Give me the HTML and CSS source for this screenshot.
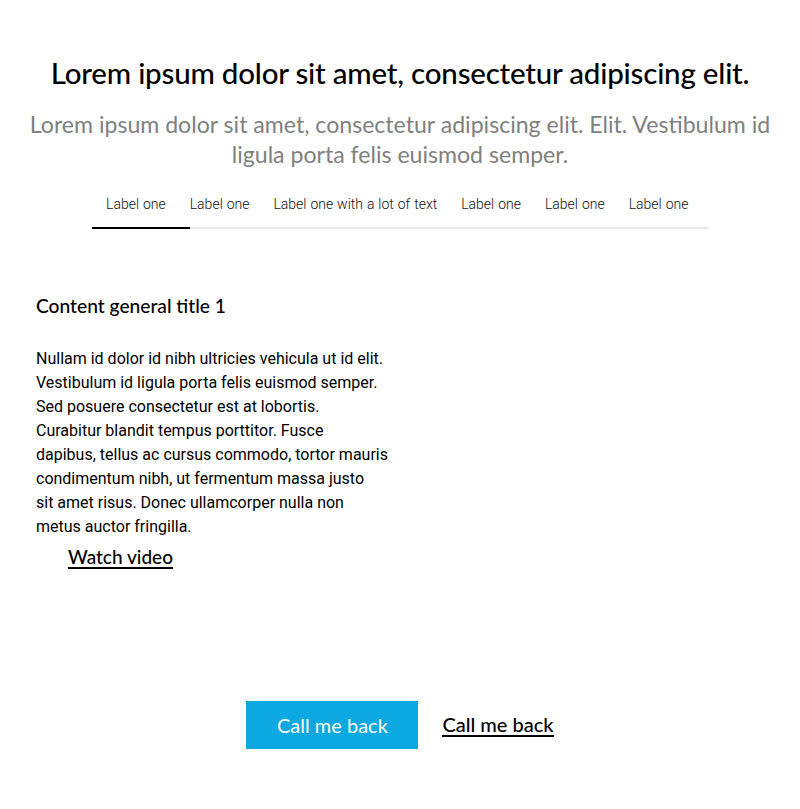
FILE: index.html
```html
<!DOCTYPE html>
<html lang="en">
<head>
<meta charset="utf-8">
<title>Page</title>
<link rel="stylesheet" href="styles.css">
</head>
<body>
<header class="hero">
  <h1 class="hero-title">Lorem ipsum dolor sit amet, consectetur adipiscing elit.</h1>
  <p class="hero-sub">Lorem ipsum dolor sit amet, consectetur adipiscing elit. Elit. Vestibulum id ligula porta felis euismod semper.</p>
</header>
<nav class="tabs">
  <a class="tab active">Label one</a>
  <a class="tab">Label one</a>
  <a class="tab">Label one with a lot of text</a>
  <a class="tab">Label one</a>
  <a class="tab">Label one</a>
  <a class="tab">Label one</a>
</nav>
<section class="content">
  <h2 class="content-title">Content general title 1</h2>
  <p class="content-text">Nullam id dolor id nibh ultricies vehicula ut id elit.<br>
Vestibulum id ligula porta felis euismod semper.<br>
Sed posuere consectetur est at lobortis.<br>
Curabitur blandit tempus porttitor. Fusce<br>
dapibus, tellus ac cursus commodo, tortor mauris<br>
condimentum nibh, ut fermentum massa justo<br>
sit amet risus. Donec ullamcorper nulla non<br>
metus auctor fringilla.</p>
  <a class="video-link">Watch video</a>
</section>
<footer class="actions">
  <a class="btn-primary">Call me back</a>
  <a class="btn-link">Call me back</a>
</footer>
</body>
</html>
```
FILE: styles.css
```css
* { box-sizing: border-box; }
body {
  margin: 0;
  background: #fff;
  color: #000;
  font-family: "Lato", "Liberation Sans", sans-serif;
}
.hero {
  padding: 54px 20px 0;
  text-align: center;
}
.hero-title {
  margin: 0;
  font-size: 29.5px;
  font-weight: 500;
  line-height: 38px;
  letter-spacing: -0.2px;
}
.hero-sub {
  margin: 17px 0 0;
  font-size: 23.1px;
  line-height: 30px;
  color: #808080;
}
.tabs {
  display: flex;
  width: 616px;
  margin: 22px auto 0;
  border-bottom: 2px solid #e6e6e6;
  font-family: "Roboto", sans-serif;
  font-size: 14px;
  font-weight: 300;
  word-spacing: 0.5px;
  color: #111;
  white-space: nowrap;
}
.tab {
  flex: none;
  padding: 5px 24px 15px 0;
  position: relative;
}
.tab.active {
  padding-left: 14px;
  padding-right: 24px;
}
.tab.active::after {
  content: "";
  position: absolute;
  left: 0;
  right: 0;
  bottom: -2px;
  height: 2px;
  background: #000;
}
.content {
  padding: 65px 36px 0;
  width: 440px;
}
.content-title {
  margin: 0;
  font-size: 19.2px;
  font-weight: 500;
  line-height: 24px;
}
.content-text {
  margin: 29px 0 0;
  font-family: "Roboto", sans-serif;
  font-size: 16px;
  line-height: 24px;
  width: 370px;
}
.video-link {
  display: inline-block;
  margin: 7px 0 0 32px;
  font-size: 19px;
  font-weight: 500;
  border-bottom: 2px solid #000;
  line-height: 21px;
}
.actions {
  display: flex;
  justify-content: center;
  align-items: center;
  gap: 24px;
  margin-top: 132px;
}
.btn-primary {
  background: #0ca8e2;
  color: #fff;
  width: 172px;
  height: 48px;
  display: flex;
  align-items: center;
  justify-content: center;
  font-size: 20px;
}
.btn-link {
  font-size: 20px;
  font-weight: 500;
  border-bottom: 2px solid #000;
  line-height: 22px;
}
```
